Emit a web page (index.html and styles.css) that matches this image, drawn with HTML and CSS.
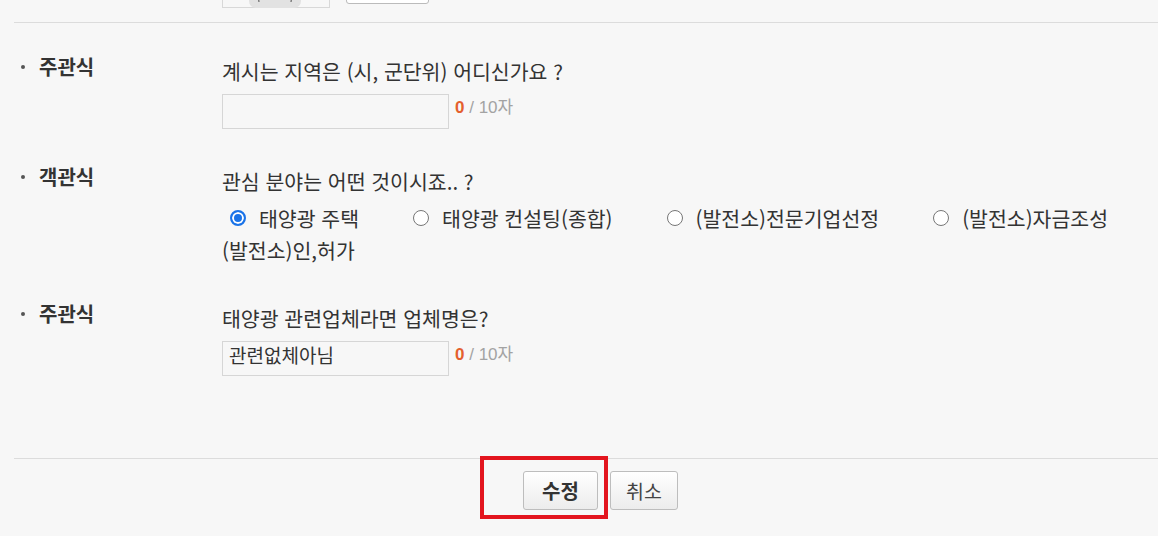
FILE: index.html
```html
<!DOCTYPE html>
<html lang="ko">
<head>
<meta charset="utf-8">
<title>설문 수정</title>
<link rel="stylesheet" href="styles.css">
</head>
<body>
<div class="page">
  <div class="top-strip">
    <div class="cut-input">
      <svg class="cut-pill" width="52" height="14" viewBox="0 0 52 14" aria-hidden="true">
        <rect x="0" y="0" width="52" height="14" rx="7" fill="#e2e2e2"/>
        <path d="M12 0 Q9 3 10 8" stroke="#666" stroke-width="1.2" fill="none"/>
        <path d="M40 0 Q43 3 42 8" stroke="#666" stroke-width="1.2" fill="none"/>
        <path d="M23 0 L29 5 M29 0 L23 5" stroke="#666" stroke-width="1.3" fill="none"/>
      </svg>
    </div>
    <div class="cut-button"></div>
  </div>
  <div class="divider"></div>

  <div class="q-list">
    <div class="q-row">
      <div class="q-label"><span class="dot"></span>주관식</div>
      <div class="q-body">
        <div class="q-title">계시는 지역은 (시, 군단위) 어디신가요 ?</div>
        <div class="answer">
          <div class="text-box"></div>
          <span class="counter"><b>0</b> / 10자</span>
        </div>
      </div>
    </div>

    <div class="q-row">
      <div class="q-label"><span class="dot"></span>객관식</div>
      <div class="q-body">
        <div class="q-title">관심 분야는 어떤 것이시죠.. ?</div>
        <div class="options">
          <span class="opt first"><span class="radio checked"></span>태양광 주택</span>
          <span class="opt"><span class="radio"></span>태양광 컨설팅(종합)</span>
          <span class="opt"><span class="radio"></span>(발전소)전문기업선정</span>
          <span class="opt"><span class="radio"></span>(발전소)자금조성</span>
          <span class="opt">(발전소)인,허가</span>
        </div>
      </div>
    </div>

    <div class="q-row">
      <div class="q-label"><span class="dot"></span>주관식</div>
      <div class="q-body">
        <div class="q-title">태양광 관련업체라면 업체명은?</div>
        <div class="answer">
          <div class="text-box">관련없체아님</div>
          <span class="counter"><b>0</b> / 10자</span>
        </div>
      </div>
    </div>
  </div>

  <div class="divider bottom"></div>
  <div class="actions">
    <button class="btn primary">수정</button>
    <button class="btn">취소</button>
    <div class="highlight"></div>
  </div>
</div>
</body>
</html>
```

FILE: styles.css
```css
html, body {
  margin: 0;
  padding: 0;
  background: #f7f7f7;
  overflow: hidden;
}

body {
  font-family: "Noto Sans CJK KR", "Noto Sans", sans-serif;
  color: #333;
}

.page {
  width: 1158px;
  height: 536px;
}

.top-strip {
  height: 22px;
  padding-left: 222px;
  display: flex;
  align-items: flex-start;
  gap: 16px;
  overflow: hidden;
}

.cut-input {
  width: 108px;
  height: 30px;
  margin-top: -22px;
  border: 1px solid #d8d8d8;
  box-sizing: border-box;
  display: flex;
  justify-content: center;
}

.cut-pill {
  display: block;
  margin-top: 15px;
  transform: translateX(-1px);
}

.cut-button {
  width: 83px;
  height: 30px;
  margin-top: -26px;
  border: 1px solid #bbb;
  border-radius: 3px;
  background: #fff;
  box-sizing: border-box;
}

.divider {
  margin-left: 14px;
  border-top: 1px solid #dcdcdc;
}

.q-list {
  padding-top: 36px;
  display: flex;
  flex-direction: column;
  gap: 40px;
}

.q-row {
  display: flex;
}

.q-label {
  width: 222px;
  box-sizing: border-box;
  padding-left: 21px;
  display: flex;
  align-items: center;
  height: 15px;
  font-size: 20px;
  font-weight: bold;
  color: #333;
}

.dot {
  width: 4px;
  height: 4px;
  border-radius: 50%;
  background: #555;
  margin-right: 14px;
  flex: none;
}

.q-body {
  flex: 1;
}

.q-title {
  font-size: 20.5px;
  line-height: 24px;
  height: 24px;
  color: #333;
}

.answer {
  margin-top: 11px;
  display: flex;
  align-items: flex-start;
  gap: 6px;
}

.text-box {
  width: 227px;
  height: 35px;
  box-sizing: border-box;
  border: 1px solid #d6d6d6;
  background: #f7f7f7;
  padding: 0 6px;
  font-size: 19px;
  line-height: 26px;
  color: #333;
}

.counter {
  font-size: 17px;
  line-height: 27px;
  color: #a3a3a3;
  font-family: "Liberation Sans", "Noto Sans CJK KR", sans-serif;
}

.counter b {
  color: #e4602d;
}

.options {
  margin-top: 9px;
  width: 936px;
  display: flex;
  flex-wrap: wrap;
  column-gap: 54px;
  font-size: 20.5px;
  color: #333;
}

.opt {
  display: flex;
  align-items: center;
  height: 32px;
  white-space: nowrap;
}

.opt.first {
  margin-left: 8px;
}

.radio {
  width: 16px;
  height: 16px;
  box-sizing: border-box;
  border: 1px solid #767676;
  border-radius: 50%;
  background: #fff;
  margin-right: 13px;
  flex: none;
}

.radio.checked {
  border: 2px solid #1a73e8;
  background: #1a73e8;
  box-shadow: inset 0 0 0 2px #fff;
}

.divider.bottom {
  margin-top: 82px;
}

.actions {
  position: relative;
  padding-top: 12px;
  padding-left: 523px;
  display: flex;
  gap: 12px;
}

.btn {
  height: 39px;
  padding: 0;
  border: 1px solid #bdbdbd;
  border-radius: 3px;
  background: linear-gradient(#ffffff, #ececec);
  font-family: "Noto Sans CJK KR", sans-serif;
  font-size: 19.5px;
  color: #444;
  width: 68px;
}

.btn.primary {
  width: 75px;
  font-weight: bold;
  font-size: 20px;
  color: #333;
}

.highlight {
  position: absolute;
  left: 480px;
  top: -3px;
  width: 128px;
  height: 63px;
  box-sizing: border-box;
  border: 4px solid #e3151e;
  pointer-events: none;
}
```
